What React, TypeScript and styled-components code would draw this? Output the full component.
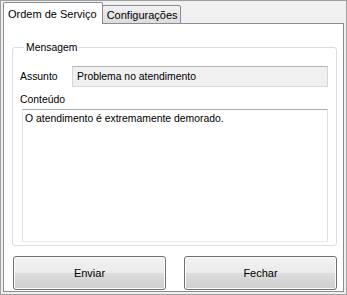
import React from "react";
import styled, { createGlobalStyle } from "styled-components";

const GlobalStyle = createGlobalStyle`
  html, body {
    margin: 0;
    padding: 0;
    background: #f0f0f0;
  }
  * {
    box-sizing: border-box;
  }
`;

const Window = styled.div`
  width: 347px;
  height: 295px;
  display: flex;
  flex-direction: column;
  padding: 1px 2px 2px 2px;
  background: #f0f0f0;
  border: 1px solid #a0a0a0;
  font-family: "Liberation Sans", Arial, sans-serif;
  font-size: 11px;
  color: #000;
`;

const TabStrip = styled.div`
  display: flex;
  align-items: flex-end;
  height: 22px;
  position: relative;
  z-index: 1;
  margin-bottom: -1px;
`;

const Tab = styled.div<{ $active?: boolean }>`
  display: flex;
  align-items: center;
  height: ${(p) => (p.$active ? "22px" : "19px")};
  padding: 0 ${(p) => (p.$active ? "5px" : "2px")} 0 4px;
  border: 1px solid #898c95;
  border-bottom: ${(p) => (p.$active ? "none" : "1px solid #898c95")};
  border-radius: 2px 2px 0 0;
  margin-left: ${(p) => (p.$active ? "0" : "-1px")};
  background: ${(p) =>
    p.$active ? "#fff" : "linear-gradient(#f3f3f3, #e6e6e6 50%, #dcdcdc)"};
  white-space: nowrap;
`;

const Panel = styled.div`
  flex: 1;
  display: flex;
  flex-direction: column;
  background: #fff;
  border: 1px solid #898c95;
  padding: 17px 6px 1px 8px;
`;

const Group = styled.fieldset`
  margin: 0;
  padding: 12px 8px 3px 7px;
  border: 1px solid #d5dfe5;
  border-radius: 3px;
  font-size: 10.4px;
`;

const Legend = styled.legend`
  padding: 0 2px;
  margin-left: 4px;
  line-height: 13px;
`;

const FieldRow = styled.div`
  display: flex;
  align-items: center;
`;

const Label = styled.span<{ $width?: number }>`
  width: ${(p) => (p.$width ? `${p.$width}px` : "auto")};
  flex-shrink: 0;
`;

const Input = styled.div`
  flex: 1;
  height: 21px;
  display: flex;
  align-items: center;
  padding: 0 4px;
  background: #f0f0f0;
  border: 1px solid;
  border-color: #b7b7b7 #d5d5d5 #d9d9d9 #d5d5d5;
`;

const ContentLabel = styled.div`
  margin: 6px 0 3px 0;
  line-height: 13px;
`;

const TextArea = styled.div`
  height: 133px;
  margin-left: 2px;
  padding: 3px 2px;
  background: #fff;
  border: 1px solid;
  border-color: #a5acb5 #dbdfe6 #e3e9ef #e2e3ea;
`;

const ButtonBar = styled.div`
  display: flex;
  justify-content: space-between;
  margin-top: auto;
  padding-left: 1px;
`;

const Button = styled.button`
  width: 153px;
  height: 34px;
  font-family: inherit;
  font-size: 11px;
  color: #000;
  border: 1px solid #707070;
  border-radius: 3px;
  box-shadow: inset 0 0 0 1px #fcfcfc;
  background: linear-gradient(#f2f2f2, #ebebeb 49%, #dddddd 50%, #cfcfcf);
  padding: 0;
`;

export default function App() {
  return (
    <>
      <GlobalStyle />
      <Window>
        <TabStrip>
          <Tab $active>Ordem de Serviço</Tab>
          <Tab>Configurações</Tab>
        </TabStrip>
        <Panel>
          <Group>
            <Legend>Mensagem</Legend>
            <FieldRow>
              <Label $width={52}>Assunto</Label>
              <Input>Problema no atendimento</Input>
            </FieldRow>
            <ContentLabel>Conteúdo</ContentLabel>
            <TextArea>O atendimento é extremamente demorado.</TextArea>
          </Group>
          <ButtonBar>
            <Button>Enviar</Button>
            <Button>Fechar</Button>
          </ButtonBar>
        </Panel>
      </Window>
    </>
  );
}
